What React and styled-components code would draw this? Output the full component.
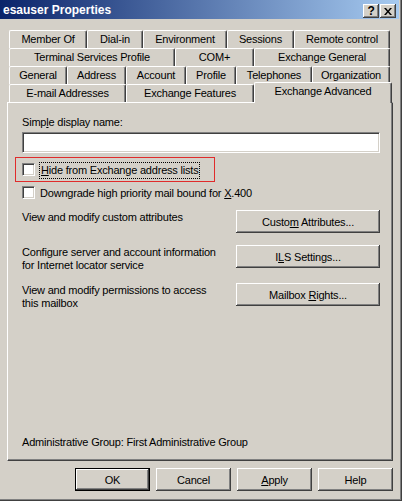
import React from "react";
import styled, { createGlobalStyle } from "styled-components";

const GlobalStyle = createGlobalStyle`
  html, body {
    margin: 0;
    padding: 0;
    background: #d4d0c8;
  }
  body {
    font-family: "Liberation Sans", Arial, sans-serif;
    font-size: 11px;
    letter-spacing: -0.2px;
    color: #000;
  }
`;

const tabRows = [
  [
    { name: "Member Of", w: 78 },
    { name: "Dial-in", w: 56 },
    { name: "Environment", w: 84 },
    { name: "Sessions", w: 67 },
    { name: "Remote control", w: 96 },
  ],
  [
    { name: "Terminal Services Profile", w: 166 },
    { name: "COM+", w: 79 },
    { name: "Exchange General", w: 136 },
  ],
  [
    { name: "General", w: 58 },
    { name: "Address", w: 59 },
    { name: "Account", w: 60 },
    { name: "Profile", w: 50 },
    { name: "Telephones", w: 76 },
    { name: "Organization", w: 78 },
  ],
  [
    { name: "E-mail Addresses", w: 117 },
    { name: "Exchange Features", w: 128 },
    { name: "Exchange Advanced", w: 138, active: true },
  ],
];

const App = () => {
  return (
    <>
      <GlobalStyle />
      <Window>
        <Frame>
          <TitleBar>
            <Title>esauser Properties</Title>
            <CapButtons>
              <CapButton>
                <HelpGlyph>?</HelpGlyph>
              </CapButton>
              <CapButton>
                <svg width="8" height="7" viewBox="0 0 8 7">
                  <path d="M0 0h2l2 2.5L6 0h2L5 3.5 8 7H6L4 4.5 2 7H0l3-3.5z" fill="#000" />
                </svg>
              </CapButton>
            </CapButtons>
          </TitleBar>

          <Client>
            <TabStrip>
              {tabRows.map((row, i) => (
                <TabRow key={i}>
                  {row.map(({ name, w, active }) =>
                    active ? (
                      <ActiveTab key={name} $w={w}>{name}</ActiveTab>
                    ) : (
                      <Tab key={name} $w={w}>{name}</Tab>
                    )
                  )}
                </TabRow>
              ))}
            </TabStrip>

            <Panel>
              <Label>
                Simp<u>l</u>e display name:
              </Label>
              <TextBox />

              <Highlight>
                <CheckRow>
                  <CheckBox />
                  <FocusLabel>
                    <u>H</u>ide from Exchange address lists
                  </FocusLabel>
                </CheckRow>
              </Highlight>

              <CheckRow $mt={3}>
                <CheckBox />
                <CheckLabel>
                  Downgrade high priority mail bound for <u>X</u>.400
                </CheckLabel>
              </CheckRow>

              <ActionRow $mt={8}>
                <ActionText>View and modify custom attributes</ActionText>
                <Button $w={144}>
                  <span>Custo<u>m</u> Attributes...</span>
                </Button>
              </ActionRow>
              <ActionRow $mt={12}>
                <ActionText>
                  Configure server and account information
                  <br />
                  for Internet locator service
                </ActionText>
                <Button $w={144}>
                  <span>I<u>L</u>S Settings...</span>
                </Button>
              </ActionRow>
              <ActionRow $mt={11}>
                <ActionText>
                  View and modify permissions to access
                  <br />
                  this mailbox
                </ActionText>
                <Button $w={144}>
                  <span>Mailbox <u>R</u>ights...</span>
                </Button>
              </ActionRow>

              <Footnote>Administrative Group: First Administrative Group</Footnote>
            </Panel>

            <DialogButtons>
              <Button $w={75} $default><span>OK</span></Button>
              <Button $w={75}><span>Cancel</span></Button>
              <Button $w={75}>
                <span><u>A</u>pply</span>
              </Button>
              <Button $w={75}><span>Help</span></Button>
            </DialogButtons>
          </Client>
        </Frame>
      </Window>
    </>
  );
};

const Window = styled.div`
  box-sizing: border-box;
  width: 402px;
  height: 501px;
  background: #d4d0c8;
  border-right: 1px solid #404040;
  border-bottom: 1px solid #404040;
`;

const Frame = styled.div`
  box-sizing: border-box;
  height: 100%;
  display: flex;
  flex-direction: column;
  border-right: 1px solid #808080;
  border-bottom: 1px solid #808080;
  padding: 0 1px 1px 0;
`;

const TitleBar = styled.div`
  display: flex;
  align-items: flex-start;
  height: 19px;
  padding: 0 3px 0 3px;
  background: linear-gradient(to right, #0a246a, #a6caf0);
`;

const Title = styled.span`
  flex: 1;
  color: #fff;
  font-weight: bold;
  font-size: 12px;
  letter-spacing: 0;
  line-height: 19px;
  padding-top: 1px;
  white-space: nowrap;
`;

const CapButtons = styled.div`
  display: flex;
  gap: 1px;
  margin-top: 4px;
`;

const CapButton = styled.div`
  box-sizing: border-box;
  width: 16px;
  height: 14px;
  display: flex;
  align-items: center;
  justify-content: center;
  background: #d4d0c8;
  box-shadow: inset -1px -1px #404040, inset 1px 1px #fff, inset -2px -2px #808080;
`;

const HelpGlyph = styled.span`
  font-weight: bold;
  font-size: 12px;
  line-height: 12px;
  margin-top: -1px;
`;

const Client = styled.div`
  flex: 1;
  display: flex;
  flex-direction: column;
  padding: 11px 0 0 7px;
`;

const TabStrip = styled.div`
  display: flex;
  flex-direction: column;
  width: 381px;
  margin-left: 2px;
  position: relative;
  z-index: 1;
`;

const TabRow = styled.div`
  display: flex;
  height: 18px;
`;

const Tab = styled.div`
  box-sizing: border-box;
  flex: 0 0 auto;
  width: ${(p) => p.$w}px;
  height: 18px;
  border-top: 1px solid #fff;
  border-left: 1px solid #fff;
  border-right: 1px solid #404040;
  border-radius: 2px 2px 0 0;
  box-shadow: inset -1px 0 #808080;
  text-align: center;
  line-height: 16px;
  white-space: nowrap;
  background: #d4d0c8;
`;

const ActiveTab = styled(Tab)`
  height: 21px;
  margin-top: -2px;
  line-height: 17px;
`;

const Panel = styled.div`
  box-sizing: border-box;
  width: 386px;
  height: 359px;
  display: flex;
  flex-direction: column;
  align-items: flex-start;
  padding: 13px 12px 11px 14px;
  border-top: 1px solid #fff;
  border-left: 1px solid #fff;
  border-right: 1px solid #404040;
  border-bottom: 1px solid #404040;
  box-shadow: inset -1px -1px #808080;
`;

const Label = styled.div`
  line-height: 13px;
`;

const TextBox = styled.div`
  box-sizing: border-box;
  align-self: stretch;
  height: 21px;
  margin-top: 3px;
  background: #fff;
  border-top: 1px solid #808080;
  border-left: 1px solid #808080;
  border-right: 1px solid #fff;
  border-bottom: 1px solid #fff;
  box-shadow: inset 1px 1px #404040, inset -1px -1px #d4d0c8;
`;

const Highlight = styled.div`
  box-sizing: border-box;
  width: 200px;
  margin: 4px 0 0 -7px;
  padding: 4px 0 0 6px;
  height: 25px;
  border: 1px solid #e02b2b;
`;

const CheckRow = styled.div`
  display: flex;
  align-items: flex-start;
  height: 17px;
  margin-top: ${(p) => p.$mt || 0}px;
`;

const CheckBox = styled.div`
  box-sizing: border-box;
  flex: 0 0 auto;
  width: 13px;
  height: 13px;
  margin-top: 1px;
  background: #fff;
  border-top: 1px solid #808080;
  border-left: 1px solid #808080;
  border-right: 1px solid #fff;
  border-bottom: 1px solid #fff;
  box-shadow: inset 1px 1px #404040, inset -1px -1px #d4d0c8;
`;

const FocusLabel = styled.span`
  margin-left: 4px;
  padding: 0 1px;
  border: 1px dotted #000;
  line-height: 15px;
  white-space: nowrap;
`;

const CheckLabel = styled.span`
  margin-left: 5px;
  line-height: 17px;
  white-space: nowrap;
`;

const ActionRow = styled.div`
  display: flex;
  align-self: stretch;
  justify-content: space-between;
  align-items: flex-start;
  margin-top: ${(p) => p.$mt}px;
`;

const ActionText = styled.div`
  margin-top: 1px;
  line-height: 13px;
`;

const Button = styled.div`
  box-sizing: border-box;
  flex: 0 0 auto;
  width: ${(p) => p.$w}px;
  height: 23px;
  display: flex;
  align-items: center;
  justify-content: center;
  white-space: pre;
  background: #d4d0c8;
  box-shadow: ${(p) =>
    p.$default
      ? "inset 0 0 0 1px #000, inset -2px -2px #404040, inset 2px 2px #fff, inset -3px -3px #808080"
      : "inset -1px -1px #404040, inset 1px 1px #fff, inset -2px -2px #808080"};
`;

const Footnote = styled.div`
  margin-top: auto;
  line-height: 13px;
`;

const DialogButtons = styled.div`
  display: flex;
  justify-content: flex-end;
  gap: 6px;
  width: 386px;
  margin-top: 7px;
`;

export default App;
